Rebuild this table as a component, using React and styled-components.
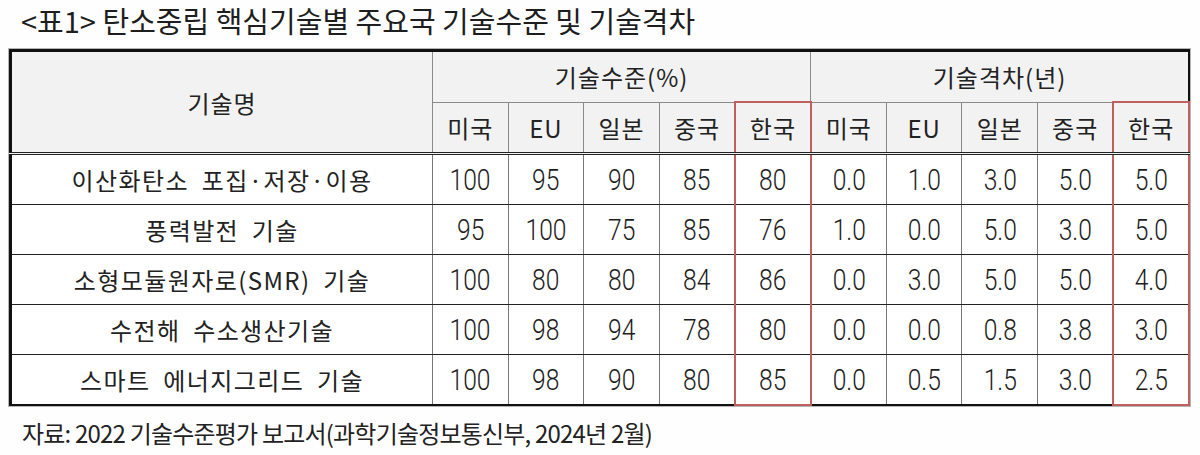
import React from 'react';
import styled, { createGlobalStyle } from 'styled-components';

const GlobalStyle = createGlobalStyle`
  html, body {
    margin: 0;
    padding: 0;
    background: #fefefe;
  }
  body {
    font-family: "Noto Sans CJK KR", "Noto Sans", sans-serif;
    color: #222;
  }
`;

const RED = '#bf605e';

const Page = styled.div`
  width: 1200px;
  height: 455px;
  padding: 4px 10px 0 9px;
  box-sizing: border-box;
`;

const Title = styled.h1`
  margin: 0 0 12px 12px;
  font-size: 29px;
  font-weight: 400;
  line-height: 33px;
  color: #1e1e1e;
  white-space: nowrap;
`;

const Table = styled.table`
  width: 1181px;
  border-collapse: collapse;
  table-layout: fixed;
  border-top: 3px solid #111;
  border-left: 3px solid #111;
  border-right: 2px solid #111;
  border-bottom: 2px solid #111;
  box-shadow: 0 0 0 1px #b5b5b5;
`;

const HeadCell = styled.th`
  height: 49px;
  padding: 0;
  background: #f2f2f2;
  font-size: 24px;
  font-weight: 400;
  letter-spacing: 1px;
  color: #222;
  text-align: center;
  border-left: 1px solid #8a8a8a;
  border-right: 1px solid #8a8a8a;
  border-bottom: ${p => (p.$last ? '3px double #222' : '1px solid #8a8a8a')};
  ${p => p.$korea && `
    border-left: 2px solid ${RED};
    border-right: 2px solid ${RED};
    border-top: 2px solid ${RED};
  `}
`;

const Cell = styled.td`
  height: 49px;
  padding: 0;
  background: #fff;
  font-size: 24px;
  color: #222;
  text-align: center;
  border-left: 1px solid #777;
  border-right: 1px solid #777;
  border-bottom: 1px solid #222;
  ${p => p.$korea && `
    border-left: 2px solid ${RED};
    border-right: 2px solid ${RED};
  `}
  ${p => p.$korea && p.$bottom && `
    border-bottom: 2px solid ${RED};
  `}
`;

const NameCell = styled(Cell)`
  letter-spacing: 1.4px;
  word-spacing: 6px;
`;

const Figure = styled.span`
  display: inline-block;
  font-family: Roboto, "Liberation Sans", sans-serif;
  font-weight: 300;
  font-size: 30px;
  color: #1c1c1c;
  transform: scaleX(0.82);
`;

const Source = styled.p`
  margin: 12px 0 0 13px;
  font-size: 24px;
  line-height: 30px;
  letter-spacing: -0.8px;
  color: #222;
  white-space: nowrap;
`;

const countries = ['미국', 'EU', '일본', '중국', '한국'];

const rows = [
  { name: '이산화탄소 포집·저장·이용', level: [100, 95, 90, 85, 80], gap: ['0.0', '1.0', '3.0', '5.0', '5.0'] },
  { name: '풍력발전 기술', level: [95, 100, 75, 85, 76], gap: ['1.0', '0.0', '5.0', '3.0', '5.0'] },
  { name: '소형모듈원자로(SMR) 기술', level: [100, 80, 80, 84, 86], gap: ['0.0', '3.0', '5.0', '5.0', '4.0'] },
  { name: '수전해 수소생산기술', level: [100, 98, 94, 78, 80], gap: ['0.0', '0.0', '0.8', '3.8', '3.0'] },
  { name: '스마트 에너지그리드 기술', level: [100, 98, 90, 80, 85], gap: ['0.0', '0.5', '1.5', '3.0', '2.5'] },
];

export default function App() {
  return (
    <Page>
      <GlobalStyle />
      <Title>&lt;표1&gt; 탄소중립 핵심기술별 주요국 기술수준 및 기술격차</Title>
      <Table>
        <colgroup>
          <col style={{ width: 422 }} />
          {Array.from({ length: 10 }).map((_, i) => (
            <col key={i} />
          ))}
        </colgroup>
        <thead>
          <tr>
            <HeadCell rowSpan={2} $last>기술명</HeadCell>
            <HeadCell colSpan={5}>기술수준(%)</HeadCell>
            <HeadCell colSpan={5}>기술격차(년)</HeadCell>
          </tr>
          <tr>
            {[0, 1].map(g =>
              countries.map(c => (
                <HeadCell key={g + c} $last $korea={c === '한국'}>{c}</HeadCell>
              ))
            )}
          </tr>
        </thead>
        <tbody>
          {rows.map((r, ri) => {
            const bottom = ri === rows.length - 1;
            return (
              <tr key={r.name}>
                <NameCell>{r.name}</NameCell>
                {r.level.map((v, i) => (
                  <Cell key={'l' + i} $korea={i === 4} $bottom={bottom}>
                    <Figure>{v}</Figure>
                  </Cell>
                ))}
                {r.gap.map((v, i) => (
                  <Cell key={'g' + i} $korea={i === 4} $bottom={bottom}>
                    <Figure>{v}</Figure>
                  </Cell>
                ))}
              </tr>
            );
          })}
        </tbody>
      </Table>
      <Source>자료: 2022 기술수준평가 보고서(과학기술정보통신부, 2024년 2월)</Source>
    </Page>
  );
}
